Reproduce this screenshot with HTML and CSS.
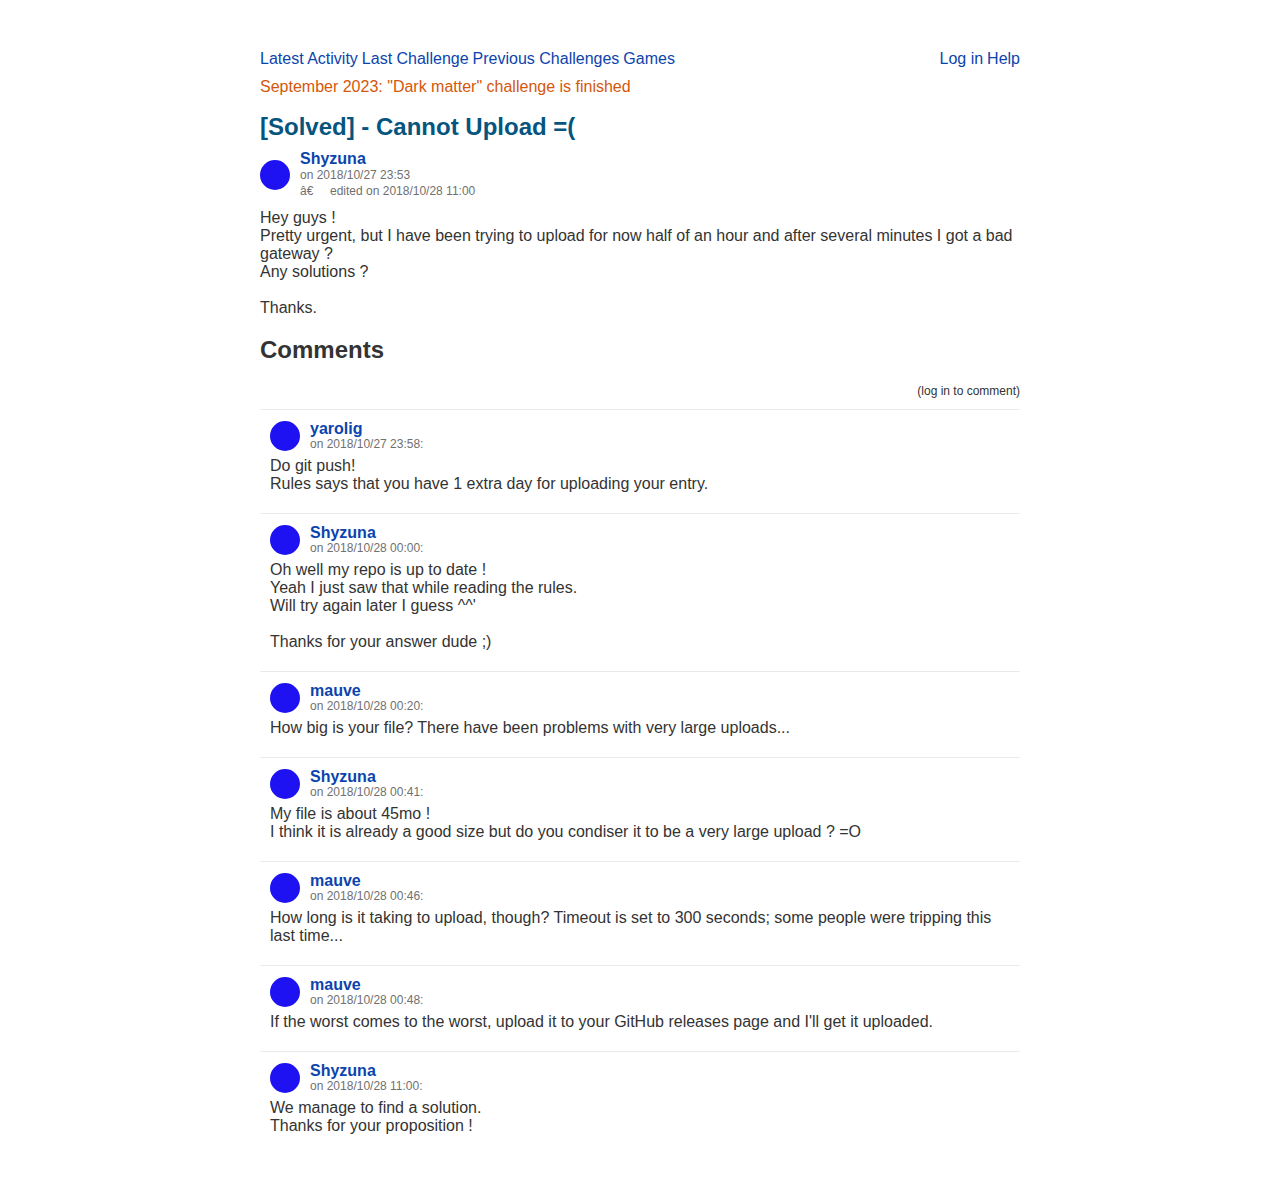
FILE: index.html
```html
<!DOCTYPE html>
<html>
<head>
<meta charset="utf-8">
<title>[Solved] - Cannot Upload =(</title>
<link rel="stylesheet" href="styles.css">
</head>
<body>
<div class="page">
  <nav class="nav">
    <div class="nav-left">
      <a href="#">Latest Activity</a>
      <a href="#">Last Challenge</a>
      <a href="#">Previous Challenges</a>
      <a href="#">Games</a>
    </div>
    <div class="nav-right">
      <a href="#">Log in</a>
      <a href="#">Help</a>
    </div>
  </nav>
  <div class="announce">September 2023: "Dark matter" challenge is finished</div>
  <h1 class="title">[Solved] - Cannot Upload =(</h1>

  <div class="post-head">
    <span class="avatar"></span>
    <div class="post-meta">
      <a class="name" href="#">Shyzuna</a>
      <div class="date">on 2018/10/27 23:53</div>
      <div class="date">â€&nbsp;&nbsp;&nbsp;&nbsp; edited on 2018/10/28 11:00</div>
    </div>
  </div>
  <div class="post-body">Hey guys !<br>Pretty urgent, but I have been trying to upload for now half of an hour and after several minutes I got a bad gateway ?<br>Any solutions ?<br><br>Thanks.</div>

  <h2 class="comments-title">Comments</h2>
  <div class="login-note">(log in to comment)</div>

  <div class="comments">
    <div class="comment">
      <div class="c-head"><span class="avatar"></span><div class="c-meta"><a class="name" href="#">yarolig</a><div class="c-date">on 2018/10/27 23:58:</div></div></div>
      <div class="c-body">Do git push!<br>Rules says that you have 1 extra day for uploading your entry.</div>
    </div>
    <div class="comment">
      <div class="c-head"><span class="avatar"></span><div class="c-meta"><a class="name" href="#">Shyzuna</a><div class="c-date">on 2018/10/28 00:00:</div></div></div>
      <div class="c-body">Oh well my repo is up to date !<br>Yeah I just saw that while reading the rules.<br>Will try again later I guess ^^'<br><br>Thanks for your answer dude ;)</div>
    </div>
    <div class="comment">
      <div class="c-head"><span class="avatar"></span><div class="c-meta"><a class="name" href="#">mauve</a><div class="c-date">on 2018/10/28 00:20:</div></div></div>
      <div class="c-body">How big is your file? There have been problems with very large uploads...</div>
    </div>
    <div class="comment">
      <div class="c-head"><span class="avatar"></span><div class="c-meta"><a class="name" href="#">Shyzuna</a><div class="c-date">on 2018/10/28 00:41:</div></div></div>
      <div class="c-body">My file is about 45mo !<br>I think it is already a good size but do you condiser it to be a very large upload ? =O</div>
    </div>
    <div class="comment">
      <div class="c-head"><span class="avatar"></span><div class="c-meta"><a class="name" href="#">mauve</a><div class="c-date">on 2018/10/28 00:46:</div></div></div>
      <div class="c-body">How long is it taking to upload, though? Timeout is set to 300 seconds; some people were tripping this last time...</div>
    </div>
    <div class="comment">
      <div class="c-head"><span class="avatar"></span><div class="c-meta"><a class="name" href="#">mauve</a><div class="c-date">on 2018/10/28 00:48:</div></div></div>
      <div class="c-body">If the worst comes to the worst, upload it to your GitHub releases page and I'll get it uploaded.</div>
    </div>
    <div class="comment">
      <div class="c-head"><span class="avatar"></span><div class="c-meta"><a class="name" href="#">Shyzuna</a><div class="c-date">on 2018/10/28 11:00:</div></div></div>
      <div class="c-body">We manage to find a solution.<br>Thanks for your proposition !</div>
    </div>
  </div>
</div>
</body>
</html>
```

FILE: styles.css
```css
html, body {
  margin: 0;
  padding: 0;
  background: #fff;
}
body {
  font-family: "Liberation Sans", Arial, sans-serif;
  font-size: 16px;
  line-height: 18px;
  color: #333;
}
a {
  color: #0b44ad;
  text-decoration: none;
}
.page {
  width: 760px;
  margin: 0 auto;
  padding: 50px 0 40px;
}
.nav {
  display: flex;
  justify-content: space-between;
}
.nav-left, .nav-right {
  display: flex;
  gap: 4px;
}
.announce {
  margin-top: 10px;
  color: #d4570b;
}
.title {
  margin: 17px 0 0;
  font-size: 24px;
  line-height: 28px;
  font-weight: bold;
  color: #05557f;
}
.post-head {
  display: flex;
  align-items: center;
  margin-top: 10px;
}
.avatar {
  width: 30px;
  height: 30px;
  border-radius: 50%;
  background: #1e12f3;
  flex: none;
  margin-right: 10px;
}
.name {
  display: block;
  font-weight: bold;
  font-size: 16px;
  line-height: 16px;
}
.post-meta .date {
  font-size: 12px;
  line-height: 16px;
  color: #707070;
}
.post-body {
  margin-top: 10px;
}
.comments-title {
  margin: 19px 0 0;
  font-size: 24px;
  line-height: 28px;
  font-weight: bold;
  color: #333;
}
.login-note {
  margin-top: 20px;
  text-align: right;
  font-size: 12px;
  line-height: 14px;
  color: #333;
}
.comments {
  margin-top: 11px;
}
.comment {
  border-top: 1px solid #eaeaea;
  padding: 11px 10px 20px;
}
.c-head {
  display: flex;
  align-items: center;
}
.c-date {
  font-size: 12px;
  line-height: 14px;
  color: #707070;
}
.c-body {
  margin-top: 6px;
}
```
